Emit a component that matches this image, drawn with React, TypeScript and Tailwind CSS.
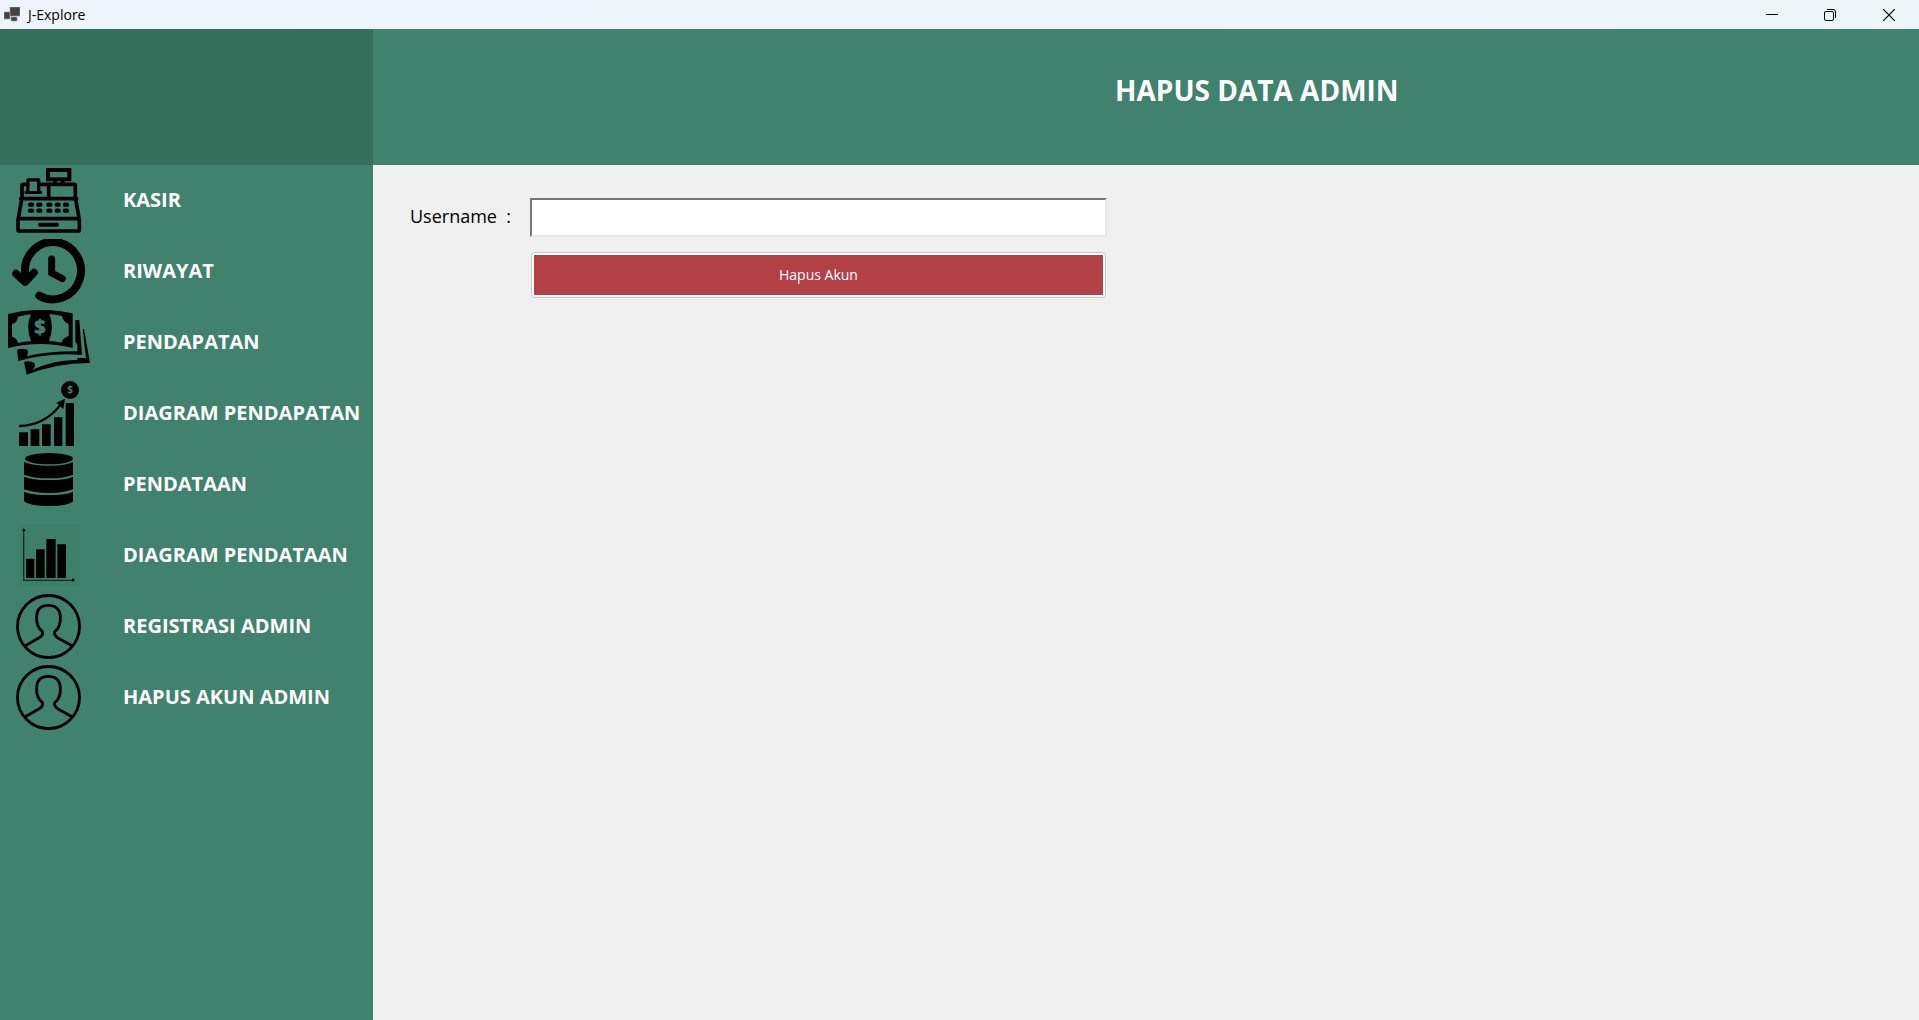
import type { ReactNode } from "react";

function IconFrame({ children }: { children: ReactNode }) {
  return (
    <svg viewBox="0 0 246 195" className="h-[65px] w-[82px] shrink-0" aria-hidden="true">
      {children}
    </svg>
  );
}

function CashRegisterIcon() {
  return (
    <IconFrame>
      <g fill="none" stroke="#000" strokeWidth="11" strokeLinejoin="round" strokeLinecap="round">
        <rect x="120" y="6" width="64" height="28" strokeWidth="12" strokeLinejoin="miter" />
        <path d="M141 36v10M164 36v10M44 49H198q4 0 4 4V88L214 156V185q0 4-4 4H34q-4 0-4-4V156L42 88V53q0-4 4-4M122 50v38M38 92H206M32 152H212" />
        <path d="M96 170H147" strokeWidth="12" />
        <path d="M60 72V36H92V72M54 73H98" strokeWidth="10" />
        <path
          d="M66 110h6M91 110h6M121 110h6M146 110h6M171 110h6M66 128h6M91 128h6M121 128h6M146 128h6M171 128h6"
          strokeWidth="13"
        />
      </g>
      <rect x="65" y="41" width="22" height="28" fill="#40826d" />
    </IconFrame>
  );
}

function HistoryIcon() {
  return (
    <IconFrame>
      <g fill="none" stroke="#000" strokeWidth="24" strokeLinecap="round">
        <path d="M51 116V98A84 86 0 1 1 94 170" />
        <path d="M131 60V102L163 119" strokeWidth="21" />
      </g>
      <path
        d="M24 104L51 129L78 101"
        fill="none"
        stroke="#000"
        strokeWidth="23"
        strokeLinecap="round"
        strokeLinejoin="round"
      />
    </IconFrame>
  );
}

function MoneyIcon() {
  return (
    <IconFrame>
      <path d="M0 12Q97-12 194 10V114Q97 90 0 114Z" />
      <path
        d="M30 20Q50 15 69 13Q52 50 69 94Q50 95 30 99Q26 82 12 80V42Q28 38 30 20ZM124 12Q144 14 162 18Q164 34 182 42V78Q166 82 160 98Q142 94 123 93Q140 50 124 12Z"
        fill="#40826d"
      />
      <text
        x="96"
        y="73"
        textAnchor="middle"
        fill="#40826d"
        stroke="#40826d"
        strokeWidth="2"
        fontSize="60"
        fontWeight="700"
        fontFamily="Open Sans, sans-serif"
      >
        $
      </text>
      <path d="M202 30H214L222 135Q126 127 31 153L27 119Q43 114 58 119Q64 130 54 139Q126 123 208 124V104L202 96Z" />
      <path d="M224 57H228L246 159Q150 158 56 194L48 156Q66 150 80 160Q84 172 72 180Q142 148 208 150V144H234Z" />
    </IconFrame>
  );
}

function IncomeChartIcon() {
  return (
    <IconFrame>
      <path d="M33 154H60V195H33ZM68 145H94V195H68ZM102 130H128V195H102ZM138 109H163V195H138ZM173 66H198V195H173Z" />
      <path d="M33 135Q112 133 158 70" fill="none" stroke="#000" strokeWidth="7" />
      <path d="M171 53L145 65L166 84Z" />
      <circle cx="186" cy="27" r="27" />
      <text
        x="186"
        y="37"
        textAnchor="middle"
        fill="#40826d"
        fontSize="30"
        fontWeight="700"
        fontFamily="Open Sans, sans-serif"
      >
        $
      </text>
    </IconFrame>
  );
}

function DatabaseIcon() {
  return (
    <IconFrame>
      <ellipse cx="123" cy="20" rx="72" ry="17" />
      <path d="M48 30Q70 41 123 41T195 30V68Q170 79 123 79T48 68ZM48 74Q70 84 123 84T195 74V112Q170 123 123 123T48 112ZM48 119Q70 129 123 129T195 119V148Q182 162 123 162T48 148Z" />
    </IconFrame>
  );
}

function DataChartIcon() {
  return (
    <IconFrame>
      <rect x="29" y="3" width="187" height="187" opacity="0.02" />
      <path d="M54 107H79V165H54ZM84 79H110V165H84ZM115 48H143V165H115ZM148 64H174V165H148Z" />
      <path d="M47 20V172H196" fill="none" stroke="#152a24" strokeWidth="4" />
      <path d="M42 24L47 15L53 24ZM192 166L202 171L192 176Z" />
    </IconFrame>
  );
}

function PersonIcon() {
  return (
    <IconFrame>
      <g fill="none" stroke="#000" strokeWidth="8.5" strokeLinejoin="round">
        <circle cx="121.500" cy="97.500" r="93" />
        <path d="M52 155L92 132Q106 124 104 113Q84 100 86 66Q88 34 121 34T157 66Q159 100 140 113Q138 124 150 132L192 155" />
      </g>
    </IconFrame>
  );
}

const menu = [
  { label: "KASIR", Icon: CashRegisterIcon },
  { label: "RIWAYAT", Icon: HistoryIcon },
  { label: "PENDAPATAN", Icon: MoneyIcon },
  { label: "DIAGRAM PENDAPATAN", Icon: IncomeChartIcon },
  { label: "PENDATAAN", Icon: DatabaseIcon },
  { label: "DIAGRAM PENDATAAN", Icon: DataChartIcon },
  { label: "REGISTRASI ADMIN", Icon: PersonIcon },
  { label: "HAPUS AKUN ADMIN", Icon: PersonIcon },
];

function TitleBar() {
  return (
    <div className="flex h-[29px] items-center justify-between bg-linear-to-r from-[#edf4fc] to-[#ecf5f8] pl-1 text-black">
      <div className="flex items-center gap-2">
        <svg viewBox="0 0 16 16" className="size-4" aria-hidden="true">
          <path d="M0 5h6v7H0zM6 0h10v9H6zM7 10h6v4H7z" fill="#444" stroke="#999" strokeWidth="0.6" />
        </svg>
        <span className="text-sm">J-Explore</span>
      </div>
      <div className="flex h-full">
        <button aria-label="Minimize" className="flex w-[58px] items-center justify-center">
          <svg viewBox="0 0 12 12" className="size-3" aria-hidden="true">
            <path d="M0 5.500H12" stroke="#000" />
          </svg>
        </button>
        <button aria-label="Restore" className="flex w-[58px] items-center justify-center">
          <svg viewBox="0 0 12 12" className="size-3" fill="none" stroke="#000" aria-hidden="true">
            <rect x="0.500" y="2.500" width="9" height="9" rx="1.500" />
            <path d="M3 0.500H9Q11.500 0.500 11.500 3V9" />
          </svg>
        </button>
        <button aria-label="Close" className="flex w-[60px] items-center justify-center">
          <svg viewBox="0 0 12 12" className="size-3" aria-hidden="true">
            <path d="M0 0L12 12M12 0L0 12" stroke="#000" strokeWidth="1.200" />
          </svg>
        </button>
      </div>
    </div>
  );
}

export default function App() {
  return (
    <div className="flex min-h-screen flex-col bg-[#f0f0f0] font-['Open_Sans','Noto_Sans',sans-serif]">
      <TitleBar />
      <div className="flex grow">
        <aside className="w-[373px] shrink-0 bg-[#40826d]">
          <div className="h-[136px] bg-[#366e5c]" />
          <nav>
            <ul>
              {menu.map(({ label, Icon }) => (
                <li key={label}>
                  <a href="#" className="flex h-[71px] items-center gap-[33px] pl-2 text-xl font-bold whitespace-nowrap text-white">
                    <Icon />
                    <span className="pb-0.5">{label}</span>
                  </a>
                </li>
              ))}
            </ul>
          </nav>
        </aside>
        <main className="min-w-0 grow">
          <header className="flex h-[136px] items-center bg-[#40826d] pb-3.5 pl-[48%]">
            <h1 className="text-[28px] font-bold whitespace-nowrap text-white">HAPUS DATA ADMIN</h1>
          </header>
          <form className="grid grid-cols-[120px_minmax(0,577px)] items-center gap-y-[15px] pt-[33px] pl-[37px]">
            <label htmlFor="username" className="pb-1 text-lg whitespace-pre text-black">
              {"Username  :"}
            </label>
            <input
              id="username"
              type="text"
              className="h-[39px] w-full border-2 border-t-[#777] border-r-[#e8e8e8] border-b-[#e8e8e8] border-l-[#777] bg-white px-1 text-lg outline-none"
            />
            <button
              type="button"
              className="col-start-2 mx-px h-[46px] rounded-sm border border-[#c8c8c8] bg-white p-0.5 text-sm text-white"
            >
              <span className="flex h-full items-center justify-center bg-[#b24045]">Hapus Akun</span>
            </button>
          </form>
        </main>
      </div>
    </div>
  );
}
